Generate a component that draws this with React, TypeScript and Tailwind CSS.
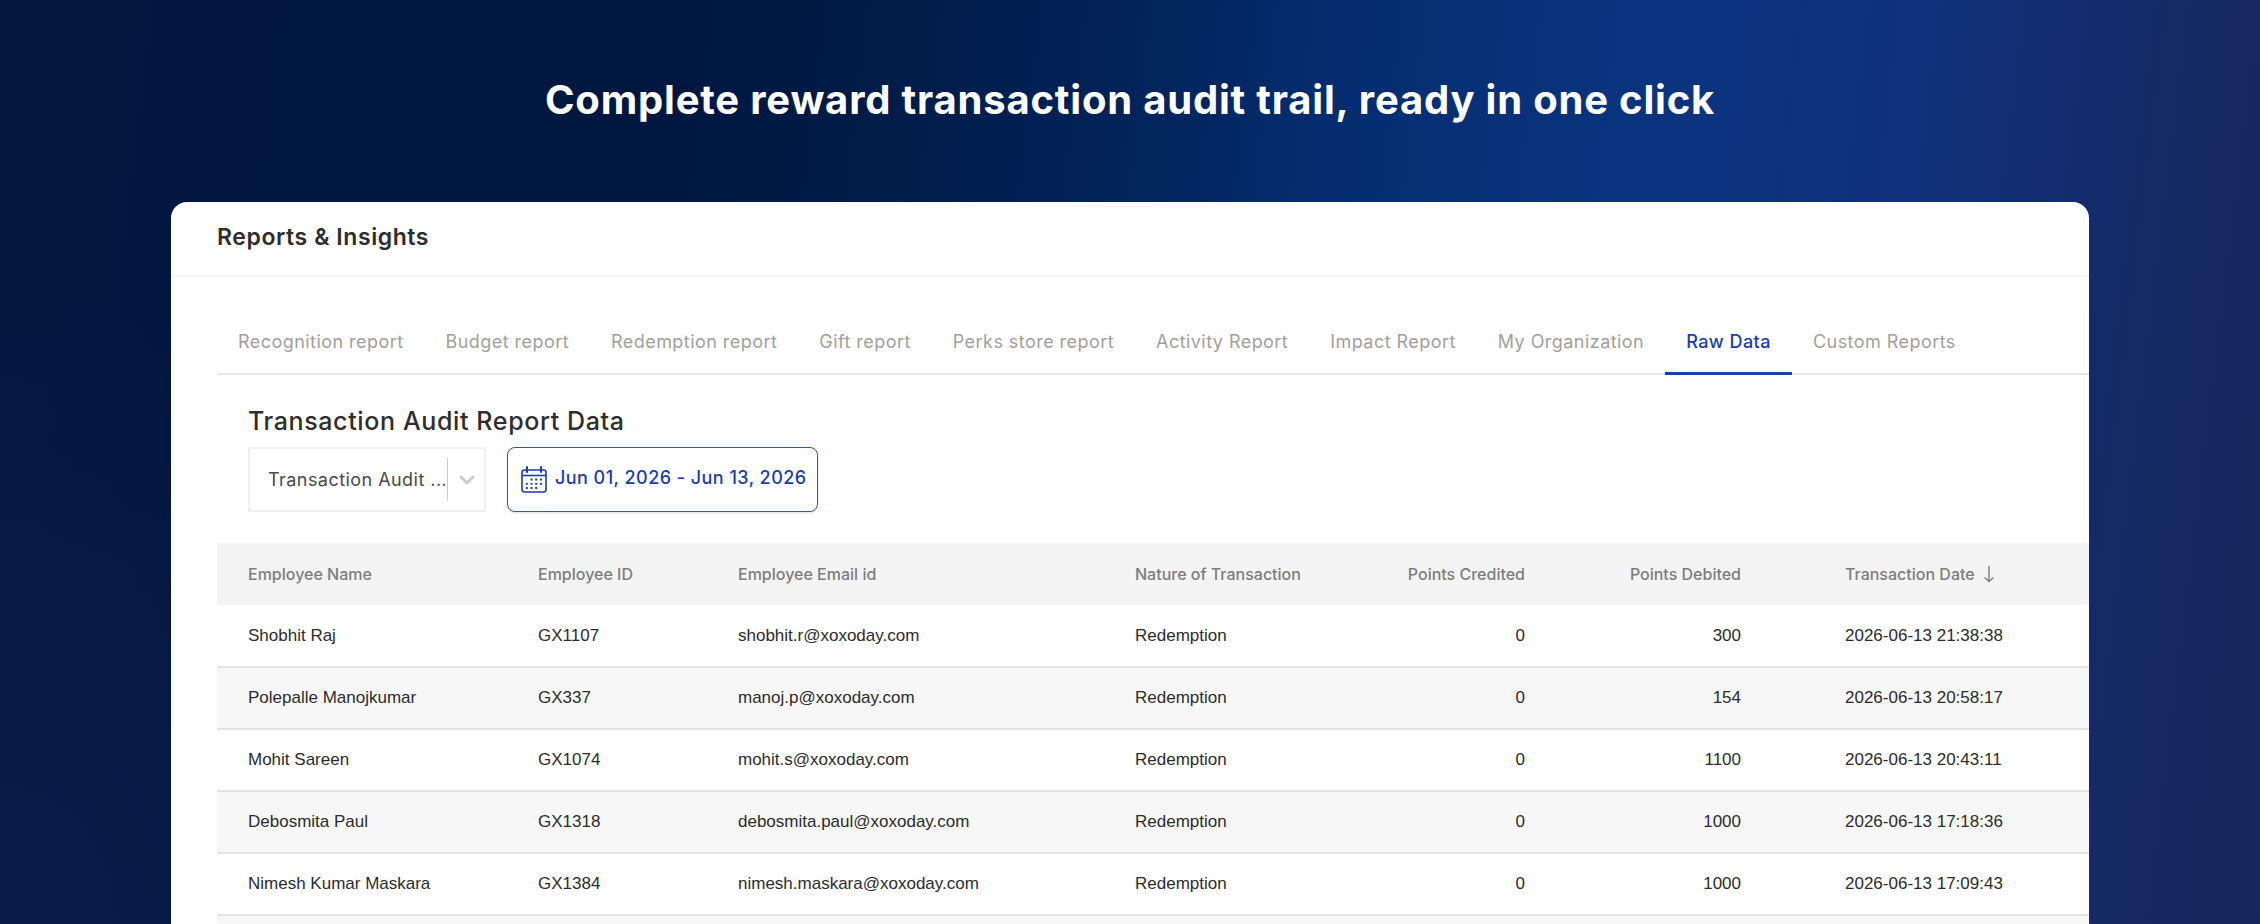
import { useState } from "react";
import { ChevronDown } from "lucide-react";
import clsx from "clsx";

const tabs = [
  "Recognition report",
  "Budget report",
  "Redemption report",
  "Gift report",
  "Perks store report",
  "Activity Report",
  "Impact Report",
  "My Organization",
  "Raw Data",
  "Custom Reports",
];

const rows = [
  { name: "Shobhit Raj", id: "GX1107", email: "shobhit.r@xoxoday.com", nature: "Redemption", credited: 0, debited: 300, date: "2026-06-13 21:38:38" },
  { name: "Polepalle Manojkumar", id: "GX337", email: "manoj.p@xoxoday.com", nature: "Redemption", credited: 0, debited: 154, date: "2026-06-13 20:58:17" },
  { name: "Mohit Sareen", id: "GX1074", email: "mohit.s@xoxoday.com", nature: "Redemption", credited: 0, debited: 1100, date: "2026-06-13 20:43:11" },
  { name: "Debosmita Paul", id: "GX1318", email: "debosmita.paul@xoxoday.com", nature: "Redemption", credited: 0, debited: 1000, date: "2026-06-13 17:18:36" },
  { name: "Nimesh Kumar Maskara", id: "GX1384", email: "nimesh.maskara@xoxoday.com", nature: "Redemption", credited: 0, debited: 1000, date: "2026-06-13 17:09:43" },
];

function CalendarIcon() {
  return (
    <svg viewBox="0 0 26 27" className="h-[27px] w-[26px] shrink-0" fill="none" stroke="currentColor" aria-hidden="true">
      <rect x="1" y="4" width="24" height="22" rx="2.5" strokeWidth="1.6" />
      <path d="M1 9.5h24" strokeWidth="1.6" />
      <path d="M6 1v5M20 1v5" strokeWidth="2" strokeLinecap="round" />
      <path d="M9.5 13.5h12" strokeWidth="1.8" strokeDasharray="2 2.7" />
      <path d="M4.8 17.8h17" strokeWidth="1.8" strokeDasharray="2 2.7" />
      <path d="M4.8 22h12.5" strokeWidth="1.8" strokeDasharray="2 2.7" />
    </svg>
  );
}

function SortArrow() {
  return (
    <svg viewBox="0 0 12 18" className="h-[18px] w-[12px]" fill="none" stroke="currentColor" strokeWidth="1.4" aria-hidden="true">
      <path d="M6 1v15M1.5 12.5 6 16.5l4.5-4" />
    </svg>
  );
}

function Tabs() {
  const [active, setActive] = useState("Raw Data");

  return (
    <div role="tablist" aria-label="Reports" className="flex border-b-2 border-[#e6e6e6]">
      {tabs.map((tab) => (
        <button
          key={tab}
          role="tab"
          aria-selected={tab === active}
          onClick={() => setActive(tab)}
          className={clsx(
            "-mb-[2px] h-[64px] shrink-0 border-b-[3px] px-[21px] text-[18px] leading-[24px] tracking-wide",
            tab === active
              ? "border-[#1a3eaa] font-medium text-[#1a3eaa]"
              : "border-transparent text-[#a39f9c]"
          )}
        >
          {tab}
        </button>
      ))}
    </div>
  );
}

function Filters() {
  return (
    <div className="flex gap-[21px] pl-[31px]">
      <div className="relative h-[65px] w-[238px]">
        <select
          aria-label="Report type"
          className="h-full w-full appearance-none border-2 border-[#f0f0f0] bg-white pr-[39px] pl-[18px] text-[18px] tracking-wide text-[#4a4a4a]"
        >
          <option>Transaction Audit ...</option>
        </select>
        <div className="pointer-events-none absolute inset-y-[11px] right-0 flex w-[39px] items-center justify-center border-l border-[#cccccc] text-[#cccccc]">
          <ChevronDown className="size-[24px]" strokeWidth={3} />
        </div>
      </div>
      <button className="flex h-[65px] items-center gap-[8px] rounded-lg border border-[#2f55b5] bg-white pr-[10px] pl-[13px] text-[18px] font-medium tracking-wide text-[#1a3eaa] shadow-sm">
        <CalendarIcon />
        <span className="pb-1">Jun 01, 2026 - Jun 13, 2026</span>
      </button>
    </div>
  );
}

function AuditTable() {
  return (
    <table className="w-full table-fixed border-collapse text-left">
      <colgroup>
        <col className="w-[290px]" />
        <col className="w-[200px]" />
        <col className="w-[397px]" />
        <col className="w-[263px]" />
        <col className="w-[231px]" />
        <col className="w-[216px]" />
        <col />
      </colgroup>
      <thead>
        <tr className="h-[62px] bg-[#f4f4f4] text-[16px] text-[#7d7d7d]">
          <th className="pl-[31px] font-medium">Employee Name</th>
          <th className="pl-[31px] font-medium">Employee ID</th>
          <th className="pl-[31px] font-medium">Employee Email id</th>
          <th className="pl-[31px] font-medium">Nature of Transaction</th>
          <th className="pr-[73px] text-right font-medium">Points Credited</th>
          <th className="pr-[73px] text-right font-medium">Points Debited</th>
          <th className="pl-[31px] font-medium" aria-sort="descending">
            <button className="flex items-center gap-[8px]">
              Transaction Date
              <SortArrow />
            </button>
          </th>
        </tr>
      </thead>
      <tbody className="font-['Liberation_Sans',Arial,sans-serif] text-[17px] text-[#2c2c2c]">
        {rows.map((row) => (
          <tr key={row.id} className="h-[62px] border-b-2 border-[#e4e4e4] even:bg-[#f7f7f7]">
            <td className="pl-[31px]">{row.name}</td>
            <td className="pl-[31px]">{row.id}</td>
            <td className="pl-[31px]">{row.email}</td>
            <td className="pl-[31px]">{row.nature}</td>
            <td className="pr-[73px] text-right">{row.credited}</td>
            <td className="pr-[73px] text-right">{row.debited}</td>
            <td className="pl-[31px]">{row.date}</td>
          </tr>
        ))}
        <tr className="h-[62px] bg-[#f7f7f7]">
          <td colSpan={7} />
        </tr>
      </tbody>
    </table>
  );
}

export default function App() {
  return (
    <div className="flex h-screen flex-col overflow-hidden bg-[radial-gradient(ellipse_24%_70%_at_0%_100%,#081c4a_0%,transparent_100%),linear-gradient(97deg,#05183f_0%,#00173f_14%,#001740_28%,#001c48_38%,#02235a_48%,#052d70_57%,#0a3480_70%,#10307a_82%,#152a66_92%,#18275a_100%)] px-[171px] font-['Inter',sans-serif]">
      <h1 className="pt-[75px] pb-[77px] text-center text-[40px] leading-[50px] font-bold tracking-[0.02em] text-white">
        Complete reward transaction audit trail, ready in one click
      </h1>
      <main className="flex-1 overflow-hidden rounded-t-2xl bg-white">
        <header className="border-b-2 border-[#f5f5f5] pt-[19px] pb-[22px] pl-[46px]">
          <h2 className="text-[23px] leading-[32px] font-semibold tracking-wide text-[#2e2e2e]">Reports &amp; Insights</h2>
        </header>
        <div className="pt-[34px] pl-[46px]">
          <Tabs />
          <h3 className="pt-[29px] pb-[9px] pl-[31px] text-[25px] leading-[34px] font-medium tracking-wide text-[#2e2e2e]">
            Transaction Audit Report Data
          </h3>
          <Filters />
          <div className="pt-[31px]">
            <AuditTable />
          </div>
        </div>
      </main>
    </div>
  );
}
